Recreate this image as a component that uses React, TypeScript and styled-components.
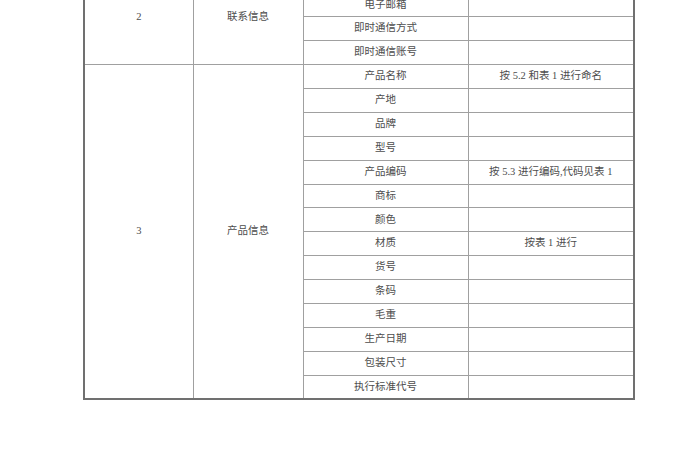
import React from 'react';
import styled, { createGlobalStyle } from 'styled-components';

const GlobalStyle = createGlobalStyle`
  html, body { margin: 0; padding: 0; background: #fff; }
`;

const Page = styled.div`
  width: 700px;
  height: 470px;
  overflow: hidden;
  background: #fff;
  padding-left: 83px;
  box-sizing: border-box;
`;

const Table = styled.table`
  margin-top: -32px;
  border-collapse: collapse;
  table-layout: fixed;
  width: 550px;
  border: 2px solid #707070;
  font-family: "Liberation Serif", "Noto Sans CJK SC", serif;
  font-size: 10.5px;
  color: #4d4d4d;
`;

const Row = styled.tr`
  height: 23.9px;
`;

const Cell = styled.td`
  border: 1px solid #a0a0a0;
  text-align: center;
  vertical-align: middle;
  padding: 0;
  white-space: nowrap;
  line-height: 1;
`;

const contact = ['电话', '电子邮箱', '即时通信方式', '即时通信账号'];

const product: [string, string][] = [
  ['产品名称', '按 5.2 和表 1 进行命名'],
  ['产地', ''],
  ['品牌', ''],
  ['型号', ''],
  ['产品编码', '按 5.3 进行编码,代码见表 1'],
  ['商标', ''],
  ['颜色', ''],
  ['材质', '按表 1 进行'],
  ['货号', ''],
  ['条码', ''],
  ['毛重', ''],
  ['生产日期', ''],
  ['包装尺寸', ''],
  ['执行标准代号', ''],
];

export default function App() {
  return (
    <>
      <GlobalStyle />
      <Page>
        <Table>
          <colgroup>
            <col style={{ width: 109 }} />
            <col style={{ width: 110 }} />
            <col style={{ width: 165 }} />
            <col style={{ width: 166 }} />
          </colgroup>
          <tbody>
            {contact.map((name, i) => (
              <Row key={name}>
                {i === 0 && (
                  <>
                    <Cell rowSpan={contact.length}>2</Cell>
                    <Cell rowSpan={contact.length}>联系信息</Cell>
                  </>
                )}
                <Cell>{name}</Cell>
                <Cell />
              </Row>
            ))}
            {product.map(([name, note], i) => (
              <Row key={name}>
                {i === 0 && (
                  <>
                    <Cell rowSpan={product.length}>3</Cell>
                    <Cell rowSpan={product.length}>产品信息</Cell>
                  </>
                )}
                <Cell>{name}</Cell>
                <Cell>{note}</Cell>
              </Row>
            ))}
          </tbody>
        </Table>
      </Page>
    </>
  );
}
